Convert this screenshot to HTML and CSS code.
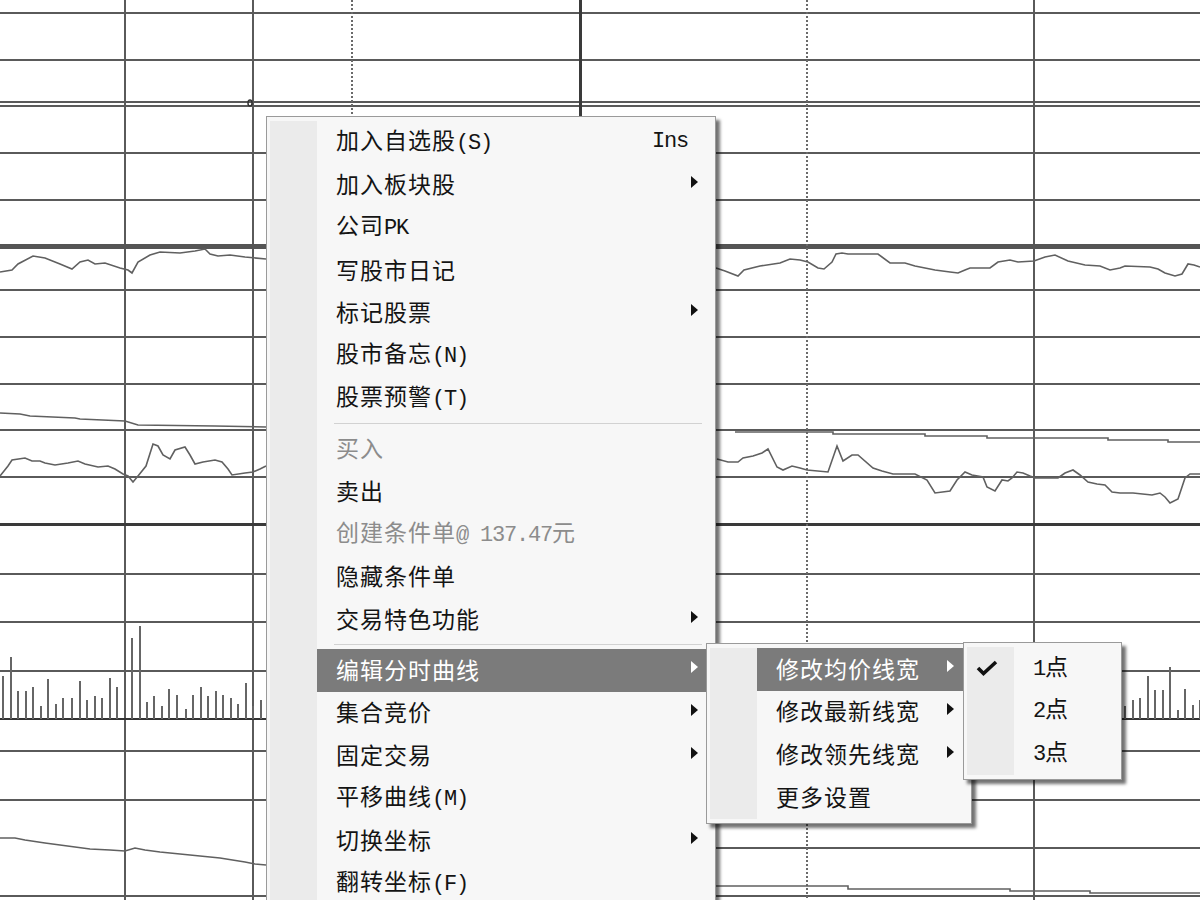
FILE: index.html
```html
<!DOCTYPE html>
<html lang="zh-CN">
<head>
    <meta charset="UTF-8">
    <title>分时图右键菜单</title>
    <link rel="stylesheet" href="styles.css">
</head>
<body>
<div class="screen">
    <svg class="chart" width="1200" height="900" viewBox="0 0 1200 900">
        <!-- grid -->
        <path class="grid" d="M0 13H1200M0 60H1200M0 102H1200M0 106H1200M0 153H1200M0 200H1200M0 290H1200M0 337H1200M0 384H1200M0 430H1200M0 477H1200M0 574H1200M0 622H1200M0 671H1200M0 751H1200M0 800H1200M0 896H1200M700 848H1200M125 0V900M253 0V900M1034 0V900"/>
        <path class="grid thick" d="M0 246.5H1200"/>
        <path class="grid mid" d="M0 524.5H1200M580.5 0V900"/>
        <path class="grid base" d="M0 719H1200"/>
        <path class="dots" d="M352 0V900M807 0V900"/>
        <ellipse cx="250" cy="103" rx="2" ry="3" class="mark"/>

        <!-- price lines -->
        <polyline class="line" points="0,272 12,270 18,264 33,256 45,258 60,264 72,269 80,262 88,260 95,264 105,263 120,268 128,270 132,273 138,262 150,255 160,252 180,253 195,251 205,249 210,254 218,256 230,255 245,257 266,259"/>
        <polyline class="line" points="716,268 725,271 738,276 744,270 760,266 780,263 790,259 800,260 808,262 818,268 824,269 832,262 836,254 842,253 848,254 878,254 890,263 905,263 915,266 935,270 950,272 958,273 965,270 970,268 990,268 998,262 1010,260 1018,262 1034,261 1045,257 1055,255 1068,261 1085,265 1100,266 1110,270 1120,268 1125,266 1150,267 1158,269 1165,273 1175,276 1182,274 1188,264 1194,265 1200,267"/>

        <polyline class="line" points="0,413 20,414 30,416 75,418 80,419 125,421 138,425 215,426 266,427"/>
        <polyline class="line" points="735,432 833,432 833,434 925,434 925,436 987,436 987,438 1108,438 1108,440 1168,440 1168,442 1200,442"/>

        <polyline class="line" points="0,476 8,466 12,460 25,458 32,461 40,461 45,463 55,465 68,463 78,461 85,464 98,467 108,466 115,469 123,474 128,476 133,482 138,476 146,466 153,444 158,446 163,455 170,459 175,450 185,447 190,455 195,464 203,462 215,460 222,462 228,469 232,475 245,473 253,472 260,469 266,466"/>
        <polyline class="line" points="717,459 728,462 738,462 743,458 753,456 762,453 768,449 777,467 783,470 792,466 800,468 807,470 828,472 837,446 843,461 852,455 858,455 873,468 882,471 893,474 915,474 927,480 935,493 950,491 957,480 965,472 972,475 983,477 987,487 995,491 1002,480 1008,481 1012,478 1017,472 1023,473 1030,476 1035,478 1058,478 1065,473 1073,470 1080,475 1088,482 1097,484 1105,485 1112,492 1120,493 1133,493 1152,495 1160,493 1165,497 1170,503 1178,499 1185,478 1190,474 1200,474"/>

        <!-- volume -->
        <path class="bars" d="M3 719V676M11 719V657M18 719V691M26 719V691M33 719V687M41 719V706M48 719V679M56 719V704M63 719V698M72 719V698M80 719V681M87 719V700M95 719V696M102 719V698M110 719V678M117 719V687M132 719V638M140 719V626M147 719V702M154 719V696M162 719V706M169 719V689M177 719V695M186 719V709M193 719V695M201 719V687M208 719V696M216 719V691M223 719V695M231 719V698M238 719V704M246 719V683M253 719V706M261 719V700M1125 719V706M1133 719V700M1140 719V698M1148 719V676M1155 719V690M1163 719V690M1170 719V667M1178 719V710M1185 719V689M1193 719V705M1200 719V700"/>

        <polyline class="line" points="0,838 15,838 25,840 45,843 60,845 75,847 90,849 110,850 125,851 135,848 145,850 160,852 180,854 200,856 220,858 245,862 255,864 266,865"/>
        <polyline class="line" points="716,886 848,886 848,889 1010,889 1010,891 1090,891 1090,893 1200,893"/>
    </svg>

    <div class="menu menu-main">
        <ul>
            <li><i class="ico"></i><span class="body"><span class="txt">加入自选股<span class="lat">(S)</span></span><span class="key">Ins</span></span></li>
            <li><i class="ico"></i><span class="body"><span class="txt">加入板块股</span><b class="arr"></b></span></li>
            <li><i class="ico"></i><span class="body"><span class="txt">公司<span class="lat">PK</span></span></span></li>
            <li><i class="ico"></i><span class="body"><span class="txt">写股市日记</span></span></li>
            <li><i class="ico"></i><span class="body"><span class="txt">标记股票</span><b class="arr"></b></span></li>
            <li><i class="ico"></i><span class="body"><span class="txt">股市备忘<span class="lat">(N)</span></span></span></li>
            <li><i class="ico"></i><span class="body"><span class="txt">股票预警<span class="lat">(T)</span></span></span></li>
            <li class="sep"><i class="ico"></i><span class="rule"></span></li>
            <li class="off"><i class="ico"></i><span class="body"><span class="txt">买入</span></span></li>
            <li><i class="ico"></i><span class="body"><span class="txt">卖出</span></span></li>
            <li class="off"><i class="ico"></i><span class="body"><span class="txt">创建条件单<span class="lat">@ 137.47</span>元</span></span></li>
            <li><i class="ico"></i><span class="body"><span class="txt">隐藏条件单</span></span></li>
            <li><i class="ico"></i><span class="body"><span class="txt">交易特色功能</span><b class="arr"></b></span></li>
            <li class="sep"><i class="ico"></i><span class="rule"></span></li>
            <li class="on"><i class="ico"></i><span class="body"><span class="txt">编辑分时曲线</span><b class="arr"></b></span></li>
            <li><i class="ico"></i><span class="body"><span class="txt">集合竞价</span><b class="arr"></b></span></li>
            <li><i class="ico"></i><span class="body"><span class="txt">固定交易</span><b class="arr"></b></span></li>
            <li><i class="ico"></i><span class="body"><span class="txt">平移曲线<span class="lat">(M)</span></span></span></li>
            <li><i class="ico"></i><span class="body"><span class="txt">切换坐标</span><b class="arr"></b></span></li>
            <li><i class="ico"></i><span class="body"><span class="txt">翻转坐标<span class="lat">(F)</span></span></span></li>
        </ul>
    </div>

    <div class="menu menu-sub">
        <ul>
            <li class="on"><i class="ico"></i><span class="body"><span class="txt">修改均价线宽</span><b class="arr"></b></span></li>
            <li><i class="ico"></i><span class="body"><span class="txt">修改最新线宽</span><b class="arr"></b></span></li>
            <li><i class="ico"></i><span class="body"><span class="txt">修改领先线宽</span><b class="arr"></b></span></li>
            <li><i class="ico"></i><span class="body"><span class="txt">更多设置</span></span></li>
        </ul>
    </div>

    <div class="menu menu-width">
        <ul>
            <li><i class="ico">
                <svg class="check" width="22" height="16" viewBox="0 0 22 16"><polyline points="2,8 7.5,13.5 20,2"/></svg>
            </i><span class="body"><span class="txt"><span class="lat">1</span>点</span></span></li>
            <li><i class="ico"></i><span class="body"><span class="txt"><span class="lat">2</span>点</span></span></li>
            <li><i class="ico"></i><span class="body"><span class="txt"><span class="lat">3</span>点</span></span></li>
        </ul>
    </div>
</div>
</body>
</html>
```

FILE: styles.css
```css
body {
    margin: 0;
    background: #fff;
    font-family: "Noto Sans CJK SC", sans-serif;
}

.screen {
    position: relative;
    width: 1200px;
    height: 900px;
    overflow: hidden;
    background: #fff;
}

.chart {
    display: block;
}

/* chart strokes */
.grid {
    fill: none;
    stroke: #5a5a5a;
    stroke-width: 2;
}

.grid.thick {
    stroke: #555;
    stroke-width: 5;
}

.grid.mid {
    stroke: #3a3a3a;
    stroke-width: 3;
}

.grid.base {
    stroke: #333;
    stroke-width: 2;
}

.dots {
    fill: none;
    stroke: #6a6a6a;
    stroke-width: 2;
    stroke-dasharray: 2 2;
}

.mark {
    fill: none;
    stroke: #333;
    stroke-width: 1.5;
}

.line {
    fill: none;
    stroke: #606060;
    stroke-width: 1.6;
}

.bars {
    fill: none;
    stroke: #666;
    stroke-width: 2;
}

/* menus */
.menu {
    position: absolute;
    padding: 4px 3px;
    background: #f7f7f7;
    border: 1px solid #9a9a9a;
    box-shadow: 4px 4px 3px rgba(0, 0, 0, .55);
}

.menu ul {
    list-style: none;
    margin: 0;
    padding: 0;
    background: linear-gradient(to right, #ebebeb 47px, transparent 47px);
}

.menu-main {
    left: 266px;
    top: 116px;
    width: 442px;
}

.menu-sub {
    left: 706px;
    top: 643px;
    width: 258px;
}

.menu-width {
    left: 963px;
    top: 642px;
    width: 151px;
}

.menu li {
    display: flex;
    height: 42.67px;
}

.menu .ico {
    flex: none;
    width: 47px;
    display: flex;
    align-items: center;
    padding-left: 9px;
    box-sizing: border-box;
}

.menu .body {
    flex: 1;
    display: flex;
    align-items: center;
    padding: 0 14px 0 19px;
}

.menu .txt {
    flex: 1;
    font-size: 23px;
    letter-spacing: 1px;
    line-height: 1;
    padding-bottom: 2px;
    color: #141414;
    white-space: nowrap;
}

.menu .lat,
.menu .key {
    font-family: "Liberation Mono", monospace;
    font-size: 22px;
    letter-spacing: -1.2px;
}

.menu .key {
    line-height: 1;
    margin-right: 10px;
    color: #141414;
}

.menu .arr {
    width: 0;
    height: 0;
    border-left: 7px solid #111;
    border-top: 6px solid transparent;
    border-bottom: 6px solid transparent;
    margin-bottom: 6px;
}

.menu li.off .txt {
    color: #8c8c8c;
}

.menu li.on .body {
    background: #7b7b7b;
}

.menu li.on .txt {
    color: #fff;
}

.menu li.on .arr {
    border-left-color: #fff;
}

.menu li.sep {
    height: 8px;
}

.menu .rule {
    flex: 1;
    margin: 3px 10px 0 17px;
    height: 1px;
    background: #d2d2d2;
}

.check polyline {
    fill: none;
    stroke: #111;
    stroke-width: 3.6;
}
```
